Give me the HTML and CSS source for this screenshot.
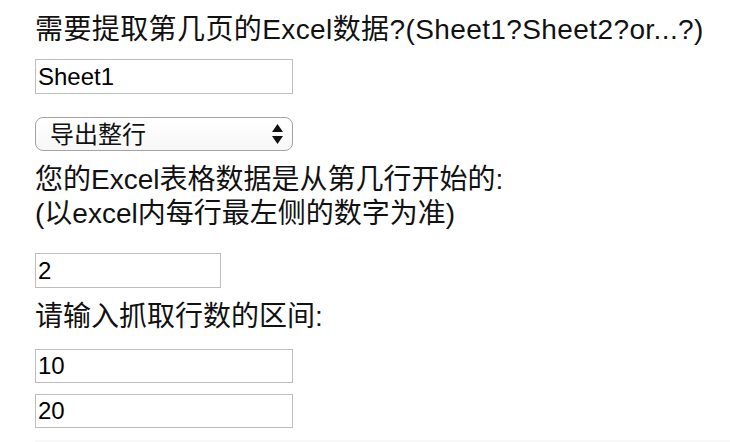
FILE: index.html
```html
<!DOCTYPE html>
<html lang="zh-CN">
<head>
<meta charset="utf-8">
<title>导出Excel数据</title>
<link rel="stylesheet" href="styles.css">
</head>
<body>
<form class="form">
  <div class="label first">需要提取第几页的Excel数据?(Sheet1?Sheet2?or...?)</div>
  <input class="field wide gap-12" type="text" value="Sheet1">
  <div class="select-wrap">
    <select class="select">
      <option>导出整行</option>
    </select>
    <svg class="arrows" width="11" height="21" viewBox="0 0 11 21" aria-hidden="true">
      <polygon points="5.5,0 11,8 0,8" fill="#111"/>
      <polygon points="0,12 11,12 5.5,20" fill="#111"/>
    </svg>
  </div>
  <div class="label gap-12">您的Excel表格数据是从第几行开始的:<br>(以excel内每行最左侧的数字为准)</div>
  <input class="field narrow gap-22" type="text" value="2">
  <div class="label gap-12">请输入抓取行数的区间:</div>
  <input class="field wide short gap-15" type="text" value="10">
  <input class="field wide short gap-11" type="text" value="20">
  <div class="footer"></div>
</form>
</body>
</html>
```
FILE: styles.css
```css
html, body {
  margin: 0;
  padding: 0;
  background: #ffffff;
}

body {
  font-family: "Liberation Sans", "Noto Sans CJK SC", sans-serif;
  color: #111;
  overflow: hidden;
}

.form {
  display: flex;
  flex-direction: column;
  align-items: flex-start;
  padding: 13px 0 0 35px;
}

.label {
  font-size: 28px;
  line-height: 34px;
  white-space: nowrap;
}

.first { letter-spacing: 0.4px; }

.gap-11 { margin-top: 11px; }
.gap-12 { margin-top: 12px; }
.gap-15 { margin-top: 15px; }
.gap-22 { margin-top: 22px; }

.field {
  box-sizing: border-box;
  height: 35px;
  margin-left: 0;
  margin-right: 0;
  margin-bottom: 0;
  padding: 0 2px;
  border: 1px solid #bdbdbd;
  border-radius: 0;
  font-family: "Liberation Sans", "Noto Sans CJK SC", sans-serif;
  font-size: 24px;
  color: #000;
  background: #fff;
  outline: none;
}

.field.short { height: 34px; }
.wide { width: 258px; }
.narrow { width: 186px; }

.select-wrap {
  position: relative;
  margin-top: 23px;
  width: 258px;
  height: 34px;
}

.select {
  -webkit-appearance: none;
  appearance: none;
  box-sizing: border-box;
  width: 258px;
  height: 34px;
  margin: 0;
  padding: 0 0 0 14px;
  border: 1px solid #a3a3a3;
  border-radius: 8px;
  background: linear-gradient(#ffffff, #f7f7f7);
  font-family: "Liberation Sans", "Noto Sans CJK SC", sans-serif;
  font-size: 24px;
  color: #111;
  outline: none;
}

.arrows {
  position: absolute;
  left: 237px;
  top: 7px;
  pointer-events: none;
}

.footer {
  margin-top: 12px;
  width: 695px;
  height: 20px;
  background: #f8f8f8;
}
```
